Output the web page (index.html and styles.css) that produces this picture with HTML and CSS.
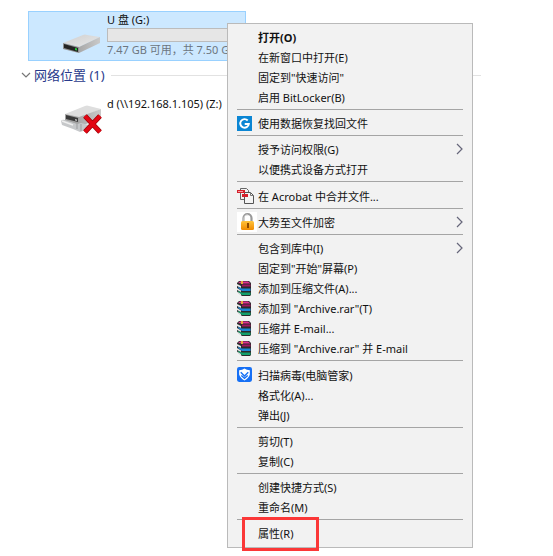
FILE: index.html
```html
<!DOCTYPE html>
<html lang="zh-CN">
  <head>
    <meta charset="UTF-8" />
    <meta name="viewport" content="width=device-width, initial-scale=1.0" />
    <title>此电脑</title>
    <link rel="stylesheet" href="styles.css">
  </head>
  <body>
    <!-- Shared icons -->
    <svg class="sprite" aria-hidden="true">
      <symbol id="icon-rar" viewBox="0 0 15 15">
        <path d="M0 2l2-2 10 0 2 2v12l-1 1H5l-5-4z" fill="#2b2b2b" />
        <path d="M1 2l2-1.500h8l2.500 2H5z" fill="#e0308f" />
        <path d="M5 3.500h8.500v2H5z" fill="#a3155f" />
        <path d="M1 6l4 1.500h8.500v2.500H5L1 7z" fill="#1c86d6" />
        <path d="M1 10l4 1.500h8.500V14H5l-4-3z" fill="#12a06a" />
        <path d="M0 3l4 2v2L0 5zM0 7l4 2.500v1.500L0 9zM0 10.500l4 2.500v1.500l-4-3z" fill="#e8e8e8" />
        <path d="M4 0h2v3H4z" fill="#e8a83a" />
      </symbol>
      <symbol id="icon-arrow" viewBox="0 0 8 12">
        <path d="M2 1l5 5-5 5" fill="none" stroke="#66667a" stroke-width="1.2" />
      </symbol>
      <linearGradient id="drive-top" x1="0" y1="0" x2="1" y2="1">
        <stop offset="0" stop-color="#cfcfcf" />
        <stop offset="1" stop-color="#e8e8e8" />
      </linearGradient>
      <linearGradient id="drive-side" x1="0" y1="0" x2="1" y2="0">
        <stop offset="0" stop-color="#a8a8a8" />
        <stop offset="1" stop-color="#cacaca" />
      </linearGradient>
      <linearGradient id="lock-body" x1="0" y1="0" x2="0" y2="1">
        <stop offset="0" stop-color="#ffc33c" />
        <stop offset="1" stop-color="#f08a00" />
      </linearGradient>
    </svg>

    <main>
      <section class="drive selected">
        <svg class="drive-icon" viewBox="0 0 42 32">
          <path d="M2 17L22 9q2-1 4 0l13 2-21 10z" fill="url(#drive-top)" />
          <path d="M18 21l21-10v6L18 27z" fill="url(#drive-side)" />
          <path d="M2 17l16 4v6L2 23z" fill="#8f8f8f" />
          <path d="M3 18l14 4v4L3 22z" fill="#242424" />
          <path d="M14 22l2 .5v2l-2-.5z" fill="#27d03b" />
        </svg>
        <div class="drive-info">
          <div class="drive-name">U 盘 (G:)</div>
          <div class="capacity"></div>
          <div class="drive-space">7.47 GB 可用，共 7.50 GB</div>
        </div>
      </section>

      <h2 class="group-title">
        <svg class="chevron" viewBox="0 0 10 8"><path d="M1 2l4 4 4-4" fill="none" stroke="#777" stroke-width="1.2" /></svg>
        <span>网络位置 (1)</span>
      </h2>

      <section class="drive network">
        <svg class="drive-icon" viewBox="0 0 42 32">
          <path d="M4 12l20-8q2-1 4 0l12 3-22 9z" fill="#dedede" />
          <path d="M18 15l22-8v9L18 25z" fill="url(#drive-side)" />
          <path d="M4 12l14 3v8L4 19z" fill="#a2a2a2" />
          <path d="M5 13l12 3v4L5 17z" fill="#3a3a3a" />
          <path d="M14 17l2 .5v1.500l-2-.5z" fill="#bbb" />
          <path d="M0 19q1-2 4-1l12 4 4-1 8 2v4l-9 3-7-3-11-4z" fill="#c6c8ca" />
          <path d="M16 22v5M20 22v7" fill="none" stroke="#9b9d9f" />
          <path d="M1 19l11 4" stroke="#efefef" stroke-width="1.5" />
          <path d="M24 14l15 16M39 14L24 30" stroke="#9c0006" stroke-width="5" />
          <path d="M24 14l15 16M39 14L24 30" stroke="#e30613" stroke-width="3.6" />
        </svg>
        <div class="drive-info">
          <div class="drive-name">d (\\192.168.1.105) (Z:)</div>
        </div>
      </section>
    </main>

    <!-- Context menu -->
    <div class="menu">
      <div class="menu-group">
        <button class="item item-default">打开(O)</button>
        <button class="item">在新窗口中打开(E)</button>
        <button class="item">固定到"快速访问"</button>
        <button class="item">启用 BitLocker(B)</button>
      </div>
      <div class="menu-group">
        <button class="item">
          <svg class="icon" viewBox="0 0 14 14">
            <path d="M0 0h14v14H0z" fill="#0b86d4" />
            <path d="M10 4.2A4 4 0 1 0 11 7.5H7.2" fill="none" stroke="#fff" stroke-width="1.8" />
          </svg>
          使用数据恢复找回文件
        </button>
      </div>
      <div class="menu-group">
        <button class="item">授予访问权限(G)<svg class="arrow"><use href="#icon-arrow" /></svg></button>
        <button class="item">以便携式设备方式打开</button>
      </div>
      <div class="menu-group">
        <button class="item item-tall">
          <svg class="icon icon-large" viewBox="0 0 18 16">
            <path d="M3.500 .5h6l2 2v9h-8z" fill="#f2f2f2" stroke="#666" />
            <path d="M7.500 4.500h6l3 3v8h-9z" fill="#f4f4f4" stroke="#555" />
            <path d="M13.500 4.500v3h3" fill="none" stroke="#777" />
            <path d="M0 2h8v3H0zM5 6h6v3H5z" fill="#d5202b" />
            <path d="M1 3.500h5" stroke="#f3a0a4" />
          </svg>
          在 Acrobat 中合并文件...
        </button>
      </div>
      <div class="menu-group">
        <button class="item">
          <svg class="icon icon-lock" viewBox="0 0 20 20">
            <path d="M0 0h20v20H0z" fill="#fff" />
            <path d="M6.500 10V6a4 4 0 0 1 8 0v4" fill="none" stroke="#999" stroke-width="2.200" />
            <path d="M7 9V6a3.500 3.500 0 0 1 4-3" fill="none" stroke="#ddd" />
            <rect x="4" y="9" width="13" height="9" rx="1.500" fill="url(#lock-body)" />
            <path d="M10 11h2v5h-2z" fill="#8e4800" />
          </svg>
          大势至文件加密<svg class="arrow"><use href="#icon-arrow" /></svg>
        </button>
      </div>
      <div class="menu-group">
        <button class="item">包含到库中(I)<svg class="arrow"><use href="#icon-arrow" /></svg></button>
        <button class="item">固定到"开始"屏幕(P)</button>
        <button class="item"><svg class="icon"><use href="#icon-rar" /></svg>添加到压缩文件(A)...</button>
        <button class="item"><svg class="icon"><use href="#icon-rar" /></svg>添加到 "Archive.rar"(T)</button>
        <button class="item"><svg class="icon"><use href="#icon-rar" /></svg>压缩并 E-mail...</button>
        <button class="item"><svg class="icon"><use href="#icon-rar" /></svg>压缩到 "Archive.rar" 并 E-mail</button>
      </div>
      <div class="menu-group">
        <button class="item item-tall">
          <svg class="icon" viewBox="0 0 14 14">
            <rect width="14" height="14" rx="2" fill="#1670f5" />
            <path d="M2 3q3 0 5-1.500Q9 3 12 3v4q-1 3.500-5 5.500Q3 10.500 2 7z" fill="#fff" />
            <path d="M3.500 5L7 8.500 10.500 5M4 8l3 2.500L10 8" fill="none" stroke="#1670f5" stroke-width="1.300" />
          </svg>
          扫描病毒(电脑管家)
        </button>
        <button class="item">格式化(A)...</button>
        <button class="item">弹出(J)</button>
      </div>
      <div class="menu-group">
        <button class="item">剪切(T)</button>
        <button class="item">复制(C)</button>
      </div>
      <div class="menu-group">
        <button class="item">创建快捷方式(S)</button>
        <button class="item">重命名(M)</button>
      </div>
      <div class="menu-group">
        <button class="item item-marked">属性(R)</button>
      </div>
    </div>
  </body>
</html>
```

FILE: styles.css
```css
:root {
  --selected: #cce8ff;
  --selected-border: #99d1ff;
  --menu-bg: #f2f2f2;
  --heading: #293a8c;
  --mark: #fb3737;
}

*,
*::after {
  box-sizing: border-box;
}

body {
  margin: 0;
  min-height: 100vh;
  background: #fff;
  color: #111;
  font-family: "Noto Sans", "Noto Sans CJK SC", sans-serif;
  font-size: 11px;
}

.sprite {
  position: absolute;
  width: 0;
  height: 0;
}

main {
  padding: 11px 72px 0 20px;
}

/* Drives */
.drive {
  display: flex;
  width: 218px;
  height: 50px;
  margin-left: 8px;
  padding: 0 4px 0 32px;
  border: 1px solid transparent;
}

.selected {
  background: var(--selected);
  border-color: var(--selected-border);
}

.drive-icon {
  flex: none;
  width: 42px;
  height: 32px;
  margin-top: 14px;
}

.network .drive-icon {
  margin-top: 6px;
}

.drive-info {
  flex: 1;
  min-width: 0;
  padding-left: 4px;
  line-height: 16px;
  white-space: nowrap;
}

.capacity {
  height: 14px;
  background: #e6e6e6;
  border: 1px solid #bcbcbc;
}

.drive-space {
  color: #6d7680;
}

.group-title {
  display: flex;
  align-items: center;
  margin: 4px 0 10px;
  color: var(--heading);
  font-size: 13px;
  font-weight: 400;
  line-height: 20px;
}

.group-title::after {
  content: "";
  flex: 1;
  height: 1px;
  margin-left: 6px;
  background: #e2e2e2;
}

.chevron {
  width: 10px;
  height: 8px;
  margin: 0 3px 0 1px;
}

/* Context menu */
.menu {
  position: absolute;
  top: 23px;
  left: 227px;
  width: 246px;
  padding: 3px 9px 4px;
  background: var(--menu-bg);
  border: 1px solid #bababa;
}

.menu-group + .menu-group {
  margin-top: 2px;
  padding-top: 3px;
  border-top: 1px solid #a5a5a5;
}

.item {
  display: flex;
  align-items: center;
  position: relative;
  width: 100%;
  height: 20px;
  padding: 0 0 0 21px;
  border: none;
  background: none;
  color: inherit;
  font: inherit;
  text-align: left;
  white-space: nowrap;
}

.item-tall {
  height: 21px;
}

.item-default {
  font-weight: 700;
}

.icon {
  flex: none;
  width: 15px;
  height: 15px;
  margin: 0 6px 0 -21px;
}

.icon-large {
  width: 18px;
  height: 16px;
  margin-right: 3px;
}

.icon-lock {
  width: 20px;
  height: 20px;
  margin-right: 1px;
}

.arrow {
  width: 8px;
  height: 12px;
  margin-left: auto;
}

/* Highlight frame over the item */
.item-marked::after {
  content: "";
  position: absolute;
  top: -6px;
  left: 5px;
  width: 77px;
  height: 34px;
  border: 3px solid var(--mark);
}
```
